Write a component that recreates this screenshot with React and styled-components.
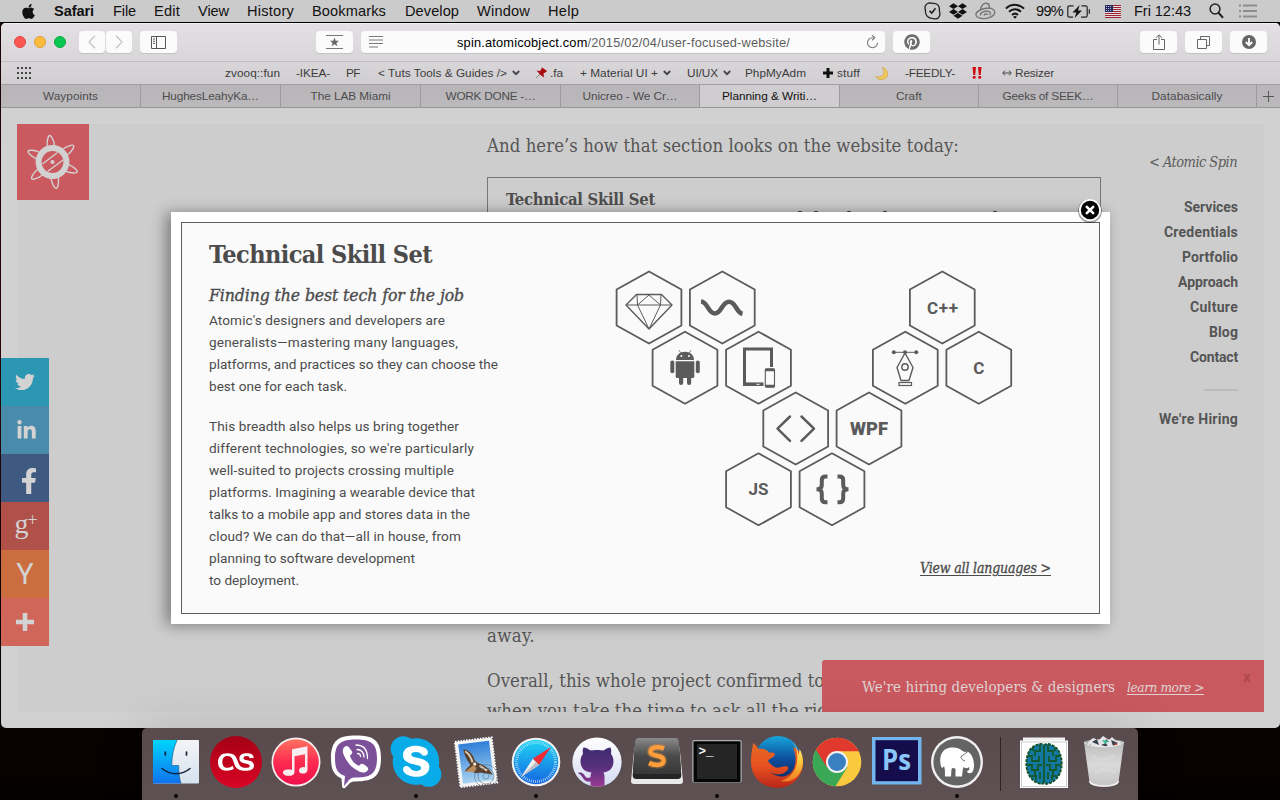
import React, { useLayoutEffect, useRef } from "react";
import styled, { createGlobalStyle, css } from "styled-components";
import {
  FaApple,
  FaDropbox,
  FaFacebookF,
  FaLastfm,
  FaLinkedinIn,
  FaPinterest,
  FaSkype,
  FaTwitter,
} from "react-icons/fa";

const sans = `"Liberation Sans", Arial, sans-serif`;
const serif = `"DejaVu Serif Condensed", "DejaVu Serif", "Liberation Serif", serif`;
const din = `Roboto, "Liberation Sans", sans-serif`;

const GlobalStyle = createGlobalStyle`
  * { box-sizing: border-box; }
  body { margin: 0; background: #060101; overflow: hidden; }
`;

/* Text tracked so that it fills a given measure. */
const FitSpan = styled.span`
  display: inline-block;
  flex: none;
  width: ${(p) => p.$w}px;
  white-space: pre;
  ${(p) =>
    p.$underline &&
    css`
      text-decoration: underline;
      text-underline-offset: 2px;
    `}
`;

function Fit({ w, underline, children }) {
  const ref = useRef(null);
  useLayoutEffect(() => {
    const el = ref.current;
    el.style.letterSpacing = "0px";
    const range = document.createRange();
    range.selectNodeContents(el);
    const natural = range.getBoundingClientRect().width;
    const count = el.textContent.length;
    el.style.letterSpacing = `${(w - natural) / count}px`;
  }, [w, children]);
  return (
    <FitSpan ref={ref} $w={w} $underline={underline}>
      {children}
    </FitSpan>
  );
}

const Desktop = styled.div`
  width: 1280px;
  height: 800px;
  display: flex;
  flex-direction: column;
  overflow: hidden;
  background: linear-gradient(#1a0204 0%, #2a0206 45%, #0a0101 80%, #060101 100%);
  font-family: ${sans};
`;

/* ---------- menu bar ---------- */

const MenuBar = styled.div`
  height: 23px;
  flex: none;
  display: flex;
  justify-content: space-between;
  background: #cbcbcb;
  border-bottom: 1px solid #000;
  font-size: 14.6px;
  line-height: 22px;
  color: #111;
`;
const MenuGroup = styled.div`
  display: flex;
  align-items: center;
  padding-left: ${(p) => p.$left || 0}px;
`;
const MenuItem = styled.div`
  width: ${(p) => p.$w}px;
  font-weight: ${(p) => (p.$bold ? 700 : 400)};
  display: flex;
  align-items: center;
  svg { display: block; }
`;

const menus = [
  ["Safari", 40, 59, true],
  ["File", 23, 41],
  ["Edit", 26, 44],
  ["View", 31, 49],
  ["History", 47, 65],
  ["Bookmarks", 74, 93],
  ["Develop", 54, 72],
  ["Window", 53, 71],
  ["Help", 31, 40],
];

const SkypeStatus = () => (
  <svg width="17" height="18" viewBox="0 0 17 18" fill="none" stroke="#222" strokeWidth="1.3">
    <path d="M4.500 1.200C6 .6 8 1.500 10 1.300C14 1.500 16 5 15.300 9C16.800 12 15.500 16.500 12 16.800C10.500 17 9.500 16.300 8 16.300C3.500 16 1 12.500 1.500 8.500C.3 5.500 1.300 2 4.500 1.200Z" />
    <path d="M5.500 8.800L7.800 11L11.500 6.300" strokeWidth="1.600" />
  </svg>
);
const CloudRing = () => (
  <svg width="21" height="18" viewBox="0 0 21 18" fill="none" stroke="#777" strokeWidth="1.400">
    <path d="M5.500 8C6 3 9 1 11.500 1.300C14 1.600 14.500 4 14.300 6C18 6.500 20.500 9 19.500 11.500C18 15.500 11 17 7 16.500C3 16 .6 14.500 1 12C1.500 9.500 3.500 8.700 5.500 8C7.500 6.500 11 6.500 14.300 6" />
    <path d="M5.500 13.500C5 10.500 9 9 12.500 9.300C15.500 9.600 16.500 11.500 14.500 13" />
    <path d="M9 13.500C9.500 11.800 12.500 11.500 12.800 13" />
  </svg>
);
const WifiGlyph = () => (
  <svg width="20" height="16" viewBox="0 0 20 16" fill="none" stroke="#161616" strokeWidth="2">
    <path d="M.9 5.600C6 .6 14 .6 19.100 5.600" />
    <path d="M4 8.800C7.500 5.500 12.500 5.500 16 8.800" />
    <path d="M7 11.900C8.900 10.300 11.100 10.300 13 11.900" />
    <path d="M10 15.800L8 13.700Q10 12.200 12 13.700Z" fill="#161616" stroke="none" />
  </svg>
);
const Battery = () => (
  <svg width="24" height="13" viewBox="0 0 24 13" fill="none" stroke="#222" strokeWidth="1.200">
    <path d="M6.500 .8H2.500Q.8.8.8 2.500V10.500Q.8 12.200 2.500 12.200H6M14.500 .8H18.500Q20.200.8 20.200 2.500V10.500Q20.200 12.200 18.500 12.200H14" />
    <path d="M22.300 4.300V8.700" />
    <path d="M12.700 0L5.500 7.400H9.300L7.600 13L15 5.400H11Z" fill="#161616" stroke="none" />
  </svg>
);
const Flag = () => (
  <svg width="16" height="13" viewBox="0 0 16 13">
    <rect width="16" height="13" fill="#ddd" />
    {[0, 2, 4, 6, 8, 10, 12].map((y) => (
      <rect key={y} y={y} width="16" height="1" fill="#a32130" />
    ))}
    <rect width="8" height="7" fill="#23285e" />
    {[1, 3, 5].map((y) =>
      [1, 3, 5].map((x) => <rect key={`${x}${y}`} x={x} y={y} width="1" height="1" fill="#b9bcd4" />)
    )}
  </svg>
);
const SearchGlyph = () => (
  <svg width="15" height="16" viewBox="0 0 15 16" fill="none" stroke="#222">
    <circle cx="6" cy="6" r="4.900" strokeWidth="1.500" />
    <path d="M9.500 9.800L14 14.700" strokeWidth="2" />
  </svg>
);
const ListGlyph = () => (
  <svg width="18" height="14" viewBox="0 0 18 14" stroke="#8d8d8d" strokeWidth="2">
    <path d="M0 1.500H2M4 1.500H18M0 7H2M4 7H18M0 12.500H2M4 12.500H18" />
  </svg>
);

/* ---------- browser window ---------- */

const Window = styled.div`
  position: relative;
  margin-left: 1px;
  height: 705px;
  flex: none;
  display: flex;
  flex-direction: column;
  border-radius: 5px;
  overflow: hidden;
  background: #d1d1d1;
`;
const Toolbar = styled.div`
  height: 38px;
  flex: none;
  display: flex;
  align-items: center;
  padding-left: 13px;
  background: linear-gradient(#e2e0e3, #d8d6d9);
  box-shadow: inset 0 1px #f2f1f3;
`;
const Lights = styled.div`
  display: flex;
  gap: 8px;
  margin-right: 13px;
`;
const Light = styled.i`
  width: 12px;
  height: 12px;
  border-radius: 50%;
  background: ${(p) => p.$c};
  border: 1px solid ${(p) => p.$b};
`;
const ToolButton = styled.div`
  width: ${(p) => p.$w || 37}px;
  height: 22px;
  margin-left: ${(p) => p.$ml || 0}px;
  border-radius: 4px;
  background: #fbfbfb;
  box-shadow: 0 1px 0 #c5c3c6;
  display: flex;
  align-items: center;
  justify-content: center;
  svg { display: block; }
`;
const UrlField = styled(ToolButton)`
  justify-content: flex-start;
  padding-left: 8px;
  font-size: 12.800px;
  color: #5e5e5e;
`;
const UrlText = styled.div`
  margin-left: 74px;
  width: 409px;
  line-height: 22px;
  padding-top: 1px;
  b { font-weight: 400; color: #000; }
`;

const Bookmarks = styled.div`
  height: 23px;
  flex: none;
  display: flex;
  align-items: center;
  padding-left: 16px;
  border-top: 1px solid #c0bec1;
  background: linear-gradient(#d8d6d9, #d0ced1);
  font-size: 11.800px;
  color: #3c3c3c;
  line-height: 22px;
`;
const Bookmark = styled.div`
  display: flex;
  align-items: center;
  width: ${(p) => p.$w}px;
  flex: none;
  svg { display: block; margin-right: ${(p) => p.$gap || 0}px; }
`;
const ChevronSvg = styled.svg`
  margin-left: 5px;
`;
const Chevron = () => (
  <ChevronSvg width="8" height="6" viewBox="0 0 8 6" fill="none" stroke="#444" strokeWidth="1.800">
    <path d="M.8 1L4 4.200L7.200 1" />
  </ChevronSvg>
);

const Tabs = styled.div`
  height: 24px;
  flex: none;
  display: grid;
  grid-template-columns: 140px 140px 140px 140px 139px 140px 139px 139px 139px 23px;
  background: linear-gradient(#b7b5b8, #bbb9bc);
  border-top: 1px solid #a19fa2;
  border-bottom: 1px solid #979598;
  font-size: 11.800px;
`;
const Tab = styled.div`
  display: flex;
  align-items: center;
  justify-content: center;
  color: ${(p) => (p.$active ? "#111" : "#4c4c4c")};
  ${(p) => p.$active && css`background: #cfcdd0;`}
  border-right: 1px solid ${(p) => (p.$last ? "transparent" : "#9d9b9e")};
`;
const tabs = [
  ["Waypoints", 55],
  ["HughesLeahyKa…", 97],
  ["The LAB Miami", 80],
  ["WORK DONE -…", 90],
  ["Unicreo - We Cr…", 95],
  ["Planning & Writi…", 95],
  ["Craft", 26],
  ["Geeks of SEEK…", 91],
  ["Databasically", 71],
];

/* ---------- page ---------- */

const Viewport = styled.div`
  position: relative;
  flex: 1;
  padding: 16px 15px 16px 16px;
`;
const Page = styled.div`
  height: 588px;
  width: 1247px;
  display: grid;
  grid-template-columns: 470px 614px 137px;
  background: #cdcdcd;
  overflow: hidden;
`;
const Logo = styled.div`
  width: 72px;
  height: 76px;
  background: #cb5a60;
  svg { display: block; }
`;
const Article = styled.div`
  display: flex;
  flex-direction: column;
  font-family: ${serif};
  font-size: 18.400px;
  line-height: 32px;
  color: #565656;
`;
const Para = styled.p`
  margin: ${(p) => p.$m};
  white-space: nowrap;
`;
const Figure = styled.div`
  height: 434px;
  border: 1px solid #777;
  padding: 12px 18px;
  font-weight: 700;
  font-size: 16.500px;
  line-height: 19px;
  color: #4e4e4e;
`;
const HexTips = styled.svg`
  display: block;
  margin: 1px 0 0 288px;
`;
const Aside = styled.aside`
  display: flex;
  flex-direction: column;
  align-items: flex-end;
  padding-top: 27px;
  font-family: ${din};
  font-size: 14px;
  font-weight: 700;
  line-height: 25px;
  color: #555;
`;
const BackLink = styled.div`
  font-family: ${serif};
  font-style: italic;
  font-weight: 400;
  font-size: 14.500px;
  line-height: 22px;
  margin-bottom: 22px;
  color: #5c5c5c;
  padding-right: 1px;
`;
const Rule = styled.div`
  width: 34px;
  height: 2px;
  margin: 19px 0 16px;
  background: #bbb;
`;
const nav = [
  ["Services", 54],
  ["Credentials", 74],
  ["Portfolio", 56],
  ["Approach", 60],
  ["Culture", 48],
  ["Blog", 29],
  ["Contact", 48],
];

const Social = styled.div`
  position: absolute;
  left: 0;
  top: 250px;
  width: 48px;
  display: flex;
  flex-direction: column;
`;
const SocialLink = styled.div`
  height: 48px;
  background: ${(p) => p.$bg};
  color: #d3d3d3;
  display: flex;
  align-items: center;
  justify-content: center;
  font-family: ${(p) => p.$font || din};
  font-size: ${(p) => p.$size || 28}px;
  font-weight: 400;
  line-height: 40px;
  padding-left: ${(p) => p.$pl || 0}px;
  padding-top: ${(p) => p.$pt || 0}px;
  padding-bottom: ${(p) => p.$pb || 0}px;
  sup { font-size: 18px; line-height: 18px; align-self: flex-start; margin: 9px 0 0 -1px; }
`;

const Hiring = styled.div`
  position: absolute;
  left: 821px;
  top: 552px;
  width: 442px;
  height: 52px;
  border-radius: 3px 0 0 0;
  background: #c9595f;
  display: flex;
  align-items: center;
  padding: 1px 0 0 40px;
  font-family: ${serif};
  font-size: 15px;
  color: #dfd3d3;
`;
const LearnMore = styled.span`
  margin-left: 12px;
  font-size: 13.500px;
  font-style: italic;
`;
const Dismiss = styled.span`
  margin: -20px 0 0 39px;
  font-family: ${din};
  font-size: 15px;
  font-weight: 700;
  color: #ae484d;
`;

/* ---------- lightbox ---------- */

const Lightbox = styled.div`
  position: absolute;
  left: 170px;
  top: 104px;
  width: 939px;
  height: 412px;
  padding: 10px;
  background: #fff;
  box-shadow: -5px 1px 14px rgba(0, 0, 0, 0.4);
`;
const Sheet = styled.div`
  width: 919px;
  height: 392px;
  border: 1px solid #5d5d5d;
  background: #fafafa;
  display: grid;
  grid-template-columns: 418px 1fr;
  padding: 16px 0 0 27px;
`;
const Copy = styled.div`
  font-family: ${din};
  font-size: 13.600px;
  line-height: 21.900px;
  color: #4c4c4c;
`;
const Title = styled.h2`
  margin: 0;
  font: 700 25px/32px ${serif};
  color: #4b4b4b;
`;
const Subtitle = styled.h3`
  margin: 11px 0 2px;
  font: italic 400 17.500px/26px ${serif};
  -webkit-text-stroke: 0.35px #4b4b4b;
  color: #4b4b4b;
`;
const Block = styled.div`
  display: flex;
  flex-direction: column;
  margin-bottom: 18.700px;
`;
const Languages = styled.div`
  display: flex;
  flex-direction: column;
  align-items: flex-start;
  svg { display: block; margin: 21px 0 0 -27px; flex: none; }
`;
const ViewAll = styled.div`
  margin: 18px 0 0 293px;
  font: italic 400 14px/20px ${serif};
  -webkit-text-stroke: 0.3px #4b4b4b;
  color: #4b4b4b;
`;
const Close = styled.div`
  position: absolute;
  right: 7px;
  top: -15px;
  width: 26px;
  height: 26px;
  svg { display: block; }
`;

const para1 = [
  ["Atomic's designers and developers are", 236],
  ["generalists—mastering many languages,", 249],
  ["platforms, and practices so they can choose the", 289],
  ["best one for each task.", 138],
];
const para2 = [
  ["This breadth also helps us bring together", 250],
  ["different technologies, so we're particularly", 265],
  ["well-suited to projects crossing multiple", 245],
  ["platforms. Imagining a wearable device that", 266],
  ["talks to a mobile app and stores data in the", 261],
  ["cloud? We can do that—all in house, from", 252],
  ["planning to software development", 206],
  ["to deployment.", 90],
];

const hexes = [
  [49, 47.5], [122.300, 47.500], [342.300, 47.500],
  [85, 107.700], [158.500, 107.700], [305.300, 107.700], [378.800, 107.700],
  [195.700, 168.500], [269, 168.500],
  [158.500, 229.300], [232, 229.300],
];

const HexCluster = () => (
  <svg width="430" height="280" viewBox="0 0 430 280" fill="none" stroke="#5b5b5b">
    {hexes.map(([x, y]) => (
      <path
        key={`${x}-${y}`}
        strokeWidth="1.800"
        strokeLinejoin="round"
        d={`M${x} ${y - 36}l32.400 18v36l-32.400 18l-32.400 -18v-36z`}
      />
    ))}
    {/* diamond */}
    <path strokeWidth="1.400" strokeLinejoin="round" d="M36.500 34.500H61.500L72 45L49 69L26 45Z" />
    <path strokeWidth="1" d="M26 45H72M37 34.500L37.500 45L49 35L60.500 45L61 34.500M37.500 45L49 69L60.500 45" />
    {/* wave */}
    <path strokeWidth="4.600" d="M101 41.500C108 42 108 53.500 115 53.500C121.500 53.500 122 41.800 129 41.800C136 41.800 136 52.500 142.500 53.800" />
    {/* android */}
    <g fill="#5b5b5b" stroke="none">
      <path d="M76 100C76 95 80 91.800 85 91.800S94 95 94 100Z" />
      <path d="M75.700 101.200H94.300V116.500Q94.300 118 92.800 118H77.200Q75.700 118 75.700 116.500Z" />
      <rect x="70.300" y="100.600" width="4" height="12.600" rx="2" />
      <rect x="95.800" y="100.600" width="4" height="12.600" rx="2" />
      <path d="M79 117H83.200V123Q83.200 125 81.100 125T79 123ZM87 117H91.200V123Q91.200 125 89.100 125T87 123Z" />
      <circle cx="81.300" cy="96" r="1" fill="#fafafa" />
      <circle cx="89" cy="96" r="1" fill="#fafafa" />
    </g>
    <path strokeWidth=".7" d="M79 90L81 93.500M91 90L89 93.500" />
    {/* tablet and phone */}
    <path strokeWidth="3" d="M171.500 107V89H144.500V124.500" />
    <path strokeWidth="3.600" d="M143 124.200H163.500" />
    <path strokeWidth="1" stroke="#fafafa" d="M156.500 124.300H159.500" />
    <rect x="165.300" y="108.800" width="9.200" height="18.300" rx="1.200" strokeWidth="1.100" />
    <path strokeWidth="2.600" d="M165 110H175M165 126H175" />
    {/* brackets */}
    <path strokeWidth="2.500" strokeLinecap="round" strokeLinejoin="round" d="M190 156.500L177.500 168.700L190 180.800M201.500 156.500L214 168.700L201.500 180.800" />
    {/* pen nib */}
    <path strokeWidth="1" d="M294 92.300H316" />
    <g fill="#5b5b5b" stroke="none">
      <circle cx="293.800" cy="92.300" r="2" />
      <circle cx="316.200" cy="92.300" r="2" />
      <circle cx="305" cy="92.300" r="2" />
    </g>
    <path strokeWidth="1.400" strokeLinejoin="round" d="M305 93L297 107.500L301 120.500H309L313 107.500Z" />
    <circle cx="305" cy="107" r="3.200" strokeWidth="1.400" />
    <rect x="299" y="122.500" width="12.500" height="3" strokeWidth="1.200" />
    {/* braces */}
    <path strokeWidth="4" d="M227.500 216.500H225.500Q221.800 216.500 221.800 220V225Q221.800 229.300 216.500 229.300Q221.800 229.300 221.800 233.500V238.500Q221.800 242.300 225.500 242.300H227.500M237.500 216.500H239.500Q243.200 216.500 243.200 220V225Q243.200 229.300 248.500 229.300Q243.200 229.300 243.200 233.500V238.500Q243.200 242.300 239.500 242.300H237.500" />
    <g fill="#5b5b5b" stroke="none" fontFamily="Roboto, sans-serif" fontWeight="700" fontSize="17" textAnchor="middle">
      <text x="342.500" y="53.500" textLength="31">C++</text>
      <text x="378.800" y="113.500">C</text>
      <text x="269" y="174.700" fontSize="18" fontWeight="900" textLength="38" lengthAdjust="spacingAndGlyphs">WPF</text>
      <text x="158.500" y="235.300" textLength="20">JS</text>
    </g>
  </svg>
);

const AtomLogo = () => (
  <svg width="72" height="76" viewBox="0 0 72 76" fill="none" stroke="#d2d2d2">
    <g strokeWidth="1.400">
      {[-6, 52, 112, 172, 231, 294].map((a) => (
        <path key={a} transform={`rotate(${a} 35.500 38)`} d="M31.800 22C32 16 34 11.300 35.500 11.300S39 16 39.200 22" />
      ))}
    </g>
    <circle cx="35.500" cy="38" r="13.900" strokeWidth="6" />
    <path strokeWidth="1.400" d="M25.500 40L40.500 28.500M30.500 47.500L46 36" />
    <circle cx="35.500" cy="38" r="2" fill="#d2d2d2" stroke="none" />
  </svg>
);

/* ---------- dock ---------- */

const Dock = styled.div`
  position: relative;
  align-self: flex-start;
  margin-left: 142px;
  width: 996px;
  height: 72px;
  padding-left: 4px;
  display: flex;
  border-radius: 5px 5px 0 0;
  background: linear-gradient(#594b4d, #5e5153);
  box-shadow: 0 0 50px rgba(0, 0, 0, 0.12);
`;
const DockCell = styled.div`
  width: 60.080px;
  height: 72px;
  flex: none;
  > svg { display: block; width: 60px; height: 72px; }
`;
const DockDivider = styled.div`
  width: 1px;
  height: 54px;
  margin: 9px 13px 0 13px;
  background: #2c2325;
`;

function DockIcon({ running, children }) {
  return (
    <DockCell>
      <svg viewBox="-30 -34 60 72">
        {children}
        {running && <circle cx="0" cy="34" r="2" fill="#060404" />}
      </svg>
    </DockCell>
  );
}

const grad = (id, stops) => (
  <linearGradient id={id} x1="0" y1="0" x2="0" y2="1">
    {stops.map((c, i) => (
      <stop key={i} offset={i / (stops.length - 1)} stopColor={c} />
    ))}
  </linearGradient>
);

const Finder = () => (
  <DockIcon running>
    <defs>{grad("fa", ["#00d4fc", "#0f72ee"])}{grad("fb", ["#f4f4f8", "#d5e2ee"])}</defs>
    <rect x="-23" y="-22" width="46" height="43.500" rx="1" fill="url(#fb)" />
    <path d="M-23 -22H1.200C-2.500 -14 -4 -6 -4.300 3.500H2.800C2.500 10 3.500 16 5 21.500H-23Z" fill="url(#fa)" />
    <path d="M1.200 -22C-2.500 -14 -4 -6 -4.300 3.500H2.800C2.500 10 3.500 16 5 21.500" fill="none" stroke="#1d3d63" strokeWidth=".5" />
    <path d="M-10.700 -10V-7M10.500 -10V-7" stroke="#12233c" strokeWidth="1.700" strokeLinecap="round" />
    <path d="M-14 6.500C-6 13.500 6 13.500 14 6.500" fill="none" stroke="#12233c" strokeWidth="1.500" strokeLinecap="round" />
  </DockIcon>
);
const LastFm = () => (
  <DockIcon>
    <defs>{grad("lf", ["#a60016", "#d80524"])}</defs>
    <circle r="26" fill="url(#lf)" />
    <g transform="scale(1 .88)">
      <FaLastfm x="-18" y="-18" size={36} color="#fff" />
    </g>
  </DockIcon>
);
const Itunes = () => (
  <DockIcon>
    <defs>{grad("it", ["#ff7261", "#fc2b50", "#f0104c"])}</defs>
    <circle r="24.500" fill="#f5eeee" />
    <circle r="22.800" fill="url(#it)" />
    <path d="M-4.500 -12.500L11 -15.500V8C11 13 2.500 13 2.500 9C2.500 5.500 7 5 8.500 5.500V-7.500L-2 -5.500V10.500C-2 15.500 -13.500 15 -13.500 11C-13.500 7.500 -9 7.500 -4.500 8Z" fill="#f6eef0" transform="translate(0.5 -.3)" />
  </DockIcon>
);
const Viber = () => (
  <DockIcon>
    <path d="M0 -26.500C17 -26.500 25 -22 25 -4C25 15 17 19 0 19.500C-4 19.500 -5 20 -7 22L-11 26Q-14 27 -14 23L-14.500 16.500C-22 13 -25 8 -25 -4C-25 -22 -17 -26.500 0 -26.500Z" fill="#fff" />
    <path d="M0 -22.500C14.500 -22.500 21 -19 21 -4C21 12 14.500 15.500 0 15.500C-5 15.500 -7 17.500 -8.500 20L-12 24L-11 14C-19 11.500 -21 6 -21 -4C-21 -19 -14.500 -22.500 0 -22.500Z" fill="#7d519a" />
    <path d="M-11 -15.500C-8 -17.500 -6.500 -14 -4 -10.500C-3 -8.500 -5 -7.500 -6 -6.500C-5 -2 -1 2.500 3 3.800C4.500 2 6 1 8 2.500C11 4.500 14 6.500 11 9C8 12 4.500 10.500 -1 7C-7 3.500 -11 -3.500 -13 -9C-13.500 -12 -13 -14 -11 -15.500Z" fill="#fff" />
    <path d="M0 -17C7.500 -17 11.500 -12.500 11.500 -3.500M1 -12.500C5.500 -12.500 8 -9 8 -5M1.500 -8.500C3.500 -8.500 4.500 -7 4.500 -5.500" fill="none" stroke="#fff" strokeWidth="1.300" strokeLinecap="round" />
  </DockIcon>
);
const Skype = () => (
  <DockIcon running>
    <circle r="18" fill="#fff" />
    <FaSkype x="-29" y="-29.500" size={58} color="#0aabe9" />
  </DockIcon>
);
const Mail = () => (
  <DockIcon>
    <defs>{grad("ml", ["#2f7fd8", "#a9d3f0"])}</defs>
    <g transform="rotate(-7)">
      <rect x="-18.500" y="-22.500" width="37" height="45.500" fill="#f3f3f3" stroke="#fff" strokeWidth="2" strokeDasharray="1.600 1.200" />
      <rect x="-15.500" y="-19.500" width="31" height="39.500" fill="url(#ml)" />
      <path d="M-11 -14C-7 -14 -2 -9 -1 -2C0 0 2 1 3 2C8 4 13 9 15 15C10 12 5 12 1 11C-2 12 -4 10 -5 8L-12 8C-11 5 -7 4 -6 2C-8 -2 -11 -8 -11 -14Z" fill="#5a402c" />
      <path d="M-9.500 -12C-6 -9 -4 -5 -3.500 0M3 4L10 10" stroke="#d9c9b4" strokeWidth="2" fill="none" />
      <path d="M-12 8L-3 3L0 6L-3 10Z" fill="#b98d5c" />
      <circle cx="-1.500" cy="2" r="1.600" fill="#efe9df" />
    </g>
    <g fill="none" stroke="#4b5866" strokeOpacity=".5" strokeWidth=".9">
      <circle cx="10" cy="14" r="11.500" /><circle cx="10" cy="14" r="8" /><circle cx="10" cy="14" r="3" />
    </g>
  </DockIcon>
);
const Safari = () => (
  <DockIcon running>
    <defs>{grad("sf", ["#1fd5f5", "#1665e0"])}</defs>
    <circle r="24.300" fill="#f2f2f2" />
    <circle r="22.300" fill="url(#sf)" />
    <circle r="19.500" fill="none" stroke="#bfe6fb" strokeWidth="3" strokeDasharray=".7 1.345" />
    <path d="M15 -15L-3.200 -3.200L3 3Z" fill="#f02b33" />
    <path d="M-15 15L-3.200 -3.200L3 3Z" fill="#eeeef0" />
    <path d="M-15 15L3 3L0 0Z" fill="#bcbcc2" />
  </DockIcon>
);
const GitHub = () => (
  <DockIcon>
    <defs>
      {grad("gw", ["#ffffff", "#d5dcf2"])}
      {grad("gh", ["#3f2c70", "#57307c", "#9a3a94"])}
    </defs>
    <circle r="24.600" fill="url(#gw)" />
    <path d="M-13.500 -14.500C-11 -14.500 -8.500 -13 -6.500 -11.500C-3 -12.300 3 -12.300 6.500 -11.500C8.500 -13 11 -14.500 13.500 -14.500C14.500 -12 14.300 -9.500 14 -8C16.500 -5 17 -1 16 3C14.500 8 10.500 10 6.500 10.500C7.300 12 7.500 13.500 7.500 15V23.500C3 25 -2 25 -6.500 23.500V19.500C-13 20.500 -13.500 16 -15.500 14C-16.500 12.500 -18 12 -19 11C-15.500 9.500 -13 12 -12 14C-11 16 -9 16 -6.500 15.500C-6.500 13.500 -6.500 12 -5.500 10.500C-10.500 10 -14.500 8 -16 3C-17 -1 -16.500 -5 -14 -8C-14.500 -10 -14.500 -12.500 -13.500 -14.500Z" fill="url(#gh)" />
  </DockIcon>
);
const Sublime = () => (
  <DockIcon>
    <defs>{grad("sb", ["#8a8a8a", "#4a4a4a", "#383838"])}</defs>
    <path d="M-22.500 -15L-26 19Q-26 22 -23 22H23Q26 22 26 19L22.500 -15Z" fill="#e9e9e9" />
    <path d="M-19 -24H19Q21.500 -24 21.800 -21L24.300 13Q24.300 17 21 17H-21Q-24.300 17 -24.300 13L-21.800 -21Q-21.500 -24 -19 -24Z" fill="#252525" />
    <path d="M-19 -24H19Q21.500 -24 21.800 -21L24 9Q24 12 21.500 12H-21.500Q-24 12 -24 9L-21.800 -21Q-21.500 -24 -19 -24Z" fill="url(#sb)" />
    <path d="M7 -13.500C1 -16 -6.500 -15 -6.500 -10C-6.500 -5 6.500 -8 6.500 -1.500C6.500 4 -2 4 -8 1" fill="none" stroke="#ff9d2e" strokeOpacity=".3" strokeWidth="7" />
    <path d="M7 -13.500C1 -16 -6.500 -15 -6.500 -10C-6.500 -5 6.500 -8 6.500 -1.500C6.500 4 -2 4 -8 1" fill="none" stroke="#ff9d3a" strokeWidth="4.300" />
  </DockIcon>
);
const Terminal = () => (
  <DockIcon running>
    <rect x="-24.700" y="-22" width="49.400" height="42.700" rx="2" fill="#a9b3b5" />
    <rect x="-23.500" y="-20.800" width="47" height="41" rx="1" fill="#060606" />
    <rect x="-20" y="-18" width="40" height="35" fill="#252525" />
    <text x="-18.500" y="-7.500" fontFamily="Liberation Mono, monospace" fontWeight="700" fontSize="12.500" fill="#f3f3f3">&gt;_</text>
  </DockIcon>
);
const Firefox = () => (
  <DockIcon>
    <defs>
      {grad("fx", ["#18a5dc", "#0d4e9c", "#0b245c"])}
      {grad("fy", ["#e66a25", "#e8521f", "#b9261a"])}
      {grad("fz", ["#fff3a0", "#ffc93a", "#ef7a20"])}
    </defs>
    <circle cx="1" cy="-3" r="23" fill="url(#fx)" />
    <path d="M-24 -19C-22 -18 -20 -15 -18.500 -13C-14 -14 -9 -12 -8 -9.500C-4 -10 -1 -9 -2.500 -6.500C-4 -4 -8 -3.500 -9 -1C-5 4 -2 7 4 5C9 3.500 12 4 11 7C8 13 -1 14 -7 10C1 17 13 16 17 6C20 -2 18 -10 16 -15C23 -12 25 -7 26 0C26 15 15 26 0 26S-26 15 -26 0C-26 -8 -24.500 -13 -24 -19Z" fill="url(#fy)" />
    <path d="M14 -21C20 -16 21 -9 20 0C19 9 13 16 4 19C16 22 26 12 26 0C26 -6 24 -11 22.500 -13C22.500 -10 22 -8 21.500 -7C20.500 -14 18 -18 14 -21Z" fill="url(#fz)" />
  </DockIcon>
);
const Chrome = () => (
  <DockIcon>
    <circle r="24.300" fill="#fbc93d" />
    <path d="M0 0L-21 -12.200A24.300 24.300 0 0 0 -1.500 24.250L10.500 5Z" fill="#3aa757" />
    <path d="M-21 -12.200A24.300 24.300 0 0 1 21.800 -10.700H0L-10 5.500Z" fill="#e2392f" />
    <circle r="11" fill="#f2f2f2" />
    <circle r="9" fill="#3a7fc0" />
  </DockIcon>
);
const Photoshop = () => (
  <DockIcon>
    <rect x="-25" y="-25" width="49.500" height="47.500" fill="#72b5ee" />
    <rect x="-21.500" y="-21.800" width="42.500" height="41" fill="#150c4c" />
    <text x="-15" y="8" fontFamily="Open Sans, sans-serif" fontWeight="700" fontSize="28" textLength="29" lengthAdjust="spacingAndGlyphs" fill="#8bc6fb">Ps</text>
  </DockIcon>
);
const Mamp = () => (
  <DockIcon running>
    <circle r="26" fill="#f0f0f0" />
    <circle r="23.600" fill="#646464" />
    <path d="M-12 14.500C-12 9 -12 7 -13 4C-14.500 7 -16 6 -16.500 2C-18 -7 -14 -14 -6 -14.500C-1 -15 2 -14 5 -11.500C8 -9 9 -11 12 -9.500C17 -6 18 4 16 9C14.500 12 10.500 12 10 9C12 9 13 7 12 5C10 7 8 6 6.500 5C5.500 8 5.500 11 5 14.500H-1.500V7Q-4 5 -5.500 7L-6 14.500Z" fill="#fff" />
    <path d="M4 -5.500L11 -10.500M4 -5.500C4 -3 5 -2 8 -1" fill="none" stroke="#646464" strokeWidth=".9" />
  </DockIcon>
);
const Brain = () => (
  <DockIcon>
    <rect x="-21" y="-24.500" width="42" height="4" fill="#efefef" />
    <rect x="-24" y="-21.500" width="48" height="47.500" fill="#fff" />
    <rect x="-22.500" y="-20" width="45" height="44.500" fill="none" stroke="#cfcfcf" />
    <path d="M0 -17C5 -20 14 -15 16 -8C19 0 18 11 12 17C8 21 2 23 0 21C-2 23 -8 21 -12 17C-18 11 -19 0 -16 -8C-14 -15 -5 -20 0 -17Z" fill="#1478a4" stroke="#12532a" strokeWidth="2" strokeDasharray="3 1" />
    <path d="M0 -17V21M-4 -17V-11H-9V-6M-16 -6H-12V-1H-5V-6M-17 3H-12V8H-6V3H-2M-13 14H-8V18M-4 10V17M-9 8V13M4 -17V-11H9V-6M16 -6H12V-1H5V-6M17 3H12V8H6V3H2M13 14H8V18M4 10V17M9 8V13M-11 -14V-11M11 -14V-11" fill="none" stroke="#12592d" strokeWidth="1.800" />
  </DockIcon>
);
const Trash = () => (
  <DockIcon>
    <defs>{grad("tr", ["#bdbdbd", "#d9d9d9", "#c4c4c4"])}</defs>
    <path d="M-20 -20C-14 -24 14 -24 20 -20L16 -13H-15Z" fill="#a9a9ab" />
    <path d="M-16 -20L-11 -24L-5 -22L-1 -26L5 -22L8 -25L12 -21L17 -21L16 -15H-15Z" fill="#e4e4e6" />
    <path d="M-12 -20L-7 -23L-5 -17ZM7 -22L14 -19L9 -16ZM-3 -17L2 -19L4 -15ZM-14 -18L-11 -15L-15 -15ZM2 -23L5 -20L1 -20Z" fill="#3a3f4c" />
    <path d="M-2 -22L5 -21L1 -18Z" fill="#3dbf9c" />
    <path d="M11 -19L14 -17L10 -16Z" fill="#c2482c" />
    <path d="M-20 -20C-14 -13.500 14 -13.500 20 -20L14.500 20C13 26.500 -13 26.500 -14.500 20Z" fill="url(#tr)" />
    <path d="M-20 -20C-14 -13.500 14 -13.500 20 -20" fill="none" stroke="#ececec" strokeWidth="1" />
    <path d="M-12 -6C-6 -2 4 -1 10 -7M-9 12C-4 7 4 6 11 11" stroke="#dedede" strokeWidth="3" strokeOpacity=".45" fill="none" />
    <path d="M-14.500 19C-13 25.500 13 25.500 14.500 19" fill="none" stroke="#f0f0f0" strokeWidth="1.500" />
  </DockIcon>
);

/* ---------- app ---------- */

export default function App() {
  return (
    <Desktop>
      <GlobalStyle />
      <MenuBar>
        <MenuGroup $left={20}>
          <MenuItem $w={34}><FaApple size={17} /></MenuItem>
          {menus.map(([label, w, cell, bold]) => (
            <MenuItem key={label} $w={cell} $bold={bold}><Fit w={w}>{label}</Fit></MenuItem>
          ))}
        </MenuGroup>
        <MenuGroup>
          <MenuItem $w={25}><SkypeStatus /></MenuItem>
          <MenuItem $w={26}><FaDropbox size={18} /></MenuItem>
          <MenuItem $w={30}><CloudRing /></MenuItem>
          <MenuItem $w={31}><WifiGlyph /></MenuItem>
          <MenuItem $w={31}><Fit w={27}>99%</Fit></MenuItem>
          <MenuItem $w={38}><Battery /></MenuItem>
          <MenuItem $w={29}><Flag /></MenuItem>
          <MenuItem $w={75}><Fit w={57}>Fri 12:43</Fit></MenuItem>
          <MenuItem $w={30}><SearchGlyph /></MenuItem>
          <MenuItem $w={41}><ListGlyph /></MenuItem>
        </MenuGroup>
      </MenuBar>

      <Window>
        <Toolbar>
          <Lights>
            <Light $c="#fc5753" $b="#df4744" />
            <Light $c="#fdbc40" $b="#de9f34" />
            <Light $c="#0ac753" $b="#0aa942" />
          </Lights>
          <ToolButton $w={26}>
            <svg width="8" height="14" viewBox="0 0 8 14" fill="none" stroke="#c4c4c4" strokeWidth="1.300"><path d="M7 .8L1 7L7 13.200" /></svg>
          </ToolButton>
          <ToolButton $w={26} $ml={1}>
            <svg width="8" height="14" viewBox="0 0 8 14" fill="none" stroke="#c4c4c4" strokeWidth="1.300"><path d="M1 .8L7 7L1 13.200" /></svg>
          </ToolButton>
          <ToolButton $ml={8}>
            <svg width="15" height="13" viewBox="0 0 15 13" fill="none" stroke="#555" strokeWidth="1"><path d="M.5.500H14.500V12.500H.5ZM5.500.500V12.500M2 3H4M2 5.200H4M2 7.400H4" /></svg>
          </ToolButton>
          <ToolButton $ml={139}>
            <svg width="17" height="14" viewBox="0 0 17 14">
              <path d="M0 .5H17M0 13.500H17" stroke="#777" />
              <path d="M8.500 2.500L9.700 5.800H13L10.400 7.900L11.400 11.300L8.500 9.300L5.600 11.300L6.600 7.900L4 5.800H7.300Z" fill="#666" />
            </svg>
          </ToolButton>
          <UrlField $w={524} $ml={8}>
            <svg width="14" height="12" viewBox="0 0 14 12" stroke="#777"><path d="M0 .5H14M0 4H14M0 7.500H14M0 11H9" /></svg>
            <UrlText>
              <Fit w={333}><b>spin.atomicobject.com</b>/2015/02/04/user-focused-website/</Fit>
            </UrlText>
            <svg width="13" height="14" viewBox="0 0 13 14" fill="none" stroke="#777" strokeWidth="1.100">
              <path d="M7.500 2.700H6.500A5 5 0 1 0 11.500 7.700" />
              <path d="M6 0L8.800 2.700L6 5.400" />
            </svg>
          </UrlField>
          <ToolButton $ml={8}><FaPinterest size={16} color="#6e6e6e" /></ToolButton>
          <ToolButton $ml={210}>
            <svg width="12" height="16" viewBox="0 0 12 16" fill="none" stroke="#666"><path d="M4 5.500H.500V15.500H11.500V5.500H8M6 10.500V1M3 3.800L6 .8L9 3.800" /></svg>
          </ToolButton>
          <ToolButton $ml={8}>
            <svg width="13" height="13" viewBox="0 0 13 13" fill="none" stroke="#666"><path d="M.5 3.500H9.500V12.500H.5ZM3.500 3V.5H12.500V9.500H10" /></svg>
          </ToolButton>
          <ToolButton $ml={8}>
            <svg width="14" height="14" viewBox="0 0 14 14"><circle cx="7" cy="7" r="7" fill="#666" /><path d="M7 3V10M3.800 7L7 10.300L10.200 7" fill="none" stroke="#fff" strokeWidth="1.800" /></svg>
          </ToolButton>
        </Toolbar>

        <Bookmarks>
          <Bookmark $w={208}>
            <svg width="15" height="12" viewBox="0 0 15 12" fill="#444">
              {[0, 4, 8, 12].map((x) => [0, 5, 10].map((y) => <rect key={`${x}-${y}`} x={x} y={y} width="2" height="2" />))}
            </svg>
          </Bookmark>
          <Bookmark $w={71}><Fit w={55}>zvooq::fun</Fit></Bookmark>
          <Bookmark $w={50}><Fit w={34}>-IKEA-</Fit></Bookmark>
          <Bookmark $w={32}><Fit w={14}>PF</Fit></Bookmark>
          <Bookmark $w={157}><Fit w={129}>{"< Tuts Tools & Guides />"}</Fit><Chevron /></Bookmark>
          <Bookmark $w={45} $gap={3}>
            <svg width="12" height="12" viewBox="0 0 12 12">
              <path d="M1 11L5 7" stroke="#888" strokeWidth="1" />
              <path d="M1.500 3.500L5 4L7 1L6.500 0L12 4L11 5L8.500 6.500L9 10.500L5.500 8Z" fill="#a80e10" />
            </svg>
            <Fit w={13}>.fa</Fit>
          </Bookmark>
          <Bookmark $w={107}><Fit w={78}>+ Material UI +</Fit><Chevron /></Bookmark>
          <Bookmark $w={58}><Fit w={31}>UI/UX</Fit><Chevron /></Bookmark>
          <Bookmark $w={78}><Fit w={61}>PhpMyAdm</Fit></Bookmark>
          <Bookmark $w={52} $gap={4}>
            <svg width="10" height="10" viewBox="0 0 10 10"><path d="M5 0V10M0 5H10" stroke="#111" strokeWidth="3" /></svg>
            <Fit w={23}>stuff</Fit>
          </Bookmark>
          <Bookmark $w={30}>
            <svg width="13" height="13" viewBox="0 0 13 13"><path d="M7 .3C14 2 14.500 10 9 12.300C5.500 13.500 2 12 .6 9.300C3.500 10.500 6.500 10 8 7.500C9.300 5 8.800 2.500 7 .3Z" fill="#efc75e" stroke="#c9963a" strokeWidth=".5" /></svg>
          </Bookmark>
          <Bookmark $w={67}><Fit w={50}>-FEEDLY-</Fit></Bookmark>
          <Bookmark $w={30}>
            <svg width="10" height="12" viewBox="0 0 10 12" fill="#d00910"><path d="M.5 0H4L3.200 8H1.300ZM6 0H9.500L8.700 8H6.800Z" /><circle cx="2.200" cy="10.300" r="1.500" /><circle cx="7.700" cy="10.300" r="1.500" /></svg>
          </Bookmark>
          <Bookmark $w={60} $gap={3}>
            <svg width="10" height="6" viewBox="0 0 10 6" fill="none" stroke="#444"><path d="M1 3H9M3 .5L.7 3L3 5.500M7 .5L9.300 3L7 5.500" /></svg>
            <Fit w={39}>Resizer</Fit>
          </Bookmark>
        </Bookmarks>

        <Tabs>
          {tabs.map(([label, w], i) => (
            <Tab key={label} $active={i === 5}><Fit w={w}>{label}</Fit></Tab>
          ))}
          <Tab $last>
            <svg width="11" height="11" viewBox="0 0 11 11" stroke="#555"><path d="M5.500 0V11M0 5.500H11" /></svg>
          </Tab>
        </Tabs>

        <Viewport>
          <Page>
            <Logo><AtomLogo /></Logo>
            <Article>
              <Para $m="6px 0 15px"><Fit w={472}>And here’s how that section looks on the website today:</Fit></Para>
              <Figure>
                <Fit w={149}>Technical Skill Set</Fit>
                <HexTips width="210" height="3" viewBox="0 0 210 3" fill="#444">
                  {[6, 22, 55, 91, 201].map((x) => <circle key={x} cx={x} cy="3.200" r="2.500" />)}
                </HexTips>
              </Figure>
              <Para $m="9px 0 13px"><Fit w={48}>away.</Fit></Para>
              <Para $m="0"><Fit w={337}>Overall, this whole project confirmed to</Fit></Para>
              <Para $m="-2px 0 0"><Fit w={341}>when you take the time to ask all the rig</Fit></Para>
            </Article>
            <Aside>
              <BackLink><Fit w={88}>&lt; Atomic Spin</Fit></BackLink>
              {nav.map(([label, w]) => <Fit key={label} w={w}>{label}</Fit>)}
              <Rule />
              <Fit w={79}>We're Hiring</Fit>
            </Aside>
          </Page>

          <Social>
            <SocialLink $bg="#2c97b2"><FaTwitter size={20} /></SocialLink>
            <SocialLink $bg="#4a8aaa" $pl={2}><FaLinkedinIn size={21} /></SocialLink>
            <SocialLink $bg="#3f5a80" $pl={8} $pt={6}><FaFacebookF size={26} /></SocialLink>
            <SocialLink $bg="#b05149" $font={`"Liberation Serif", serif`} $size={28} $pb={5} $pl={2}>g<sup>+</sup></SocialLink>
            <SocialLink $bg="#cc6d3f" $size={29}>Y</SocialLink>
            <SocialLink $bg="#d06659">
              <svg width="18" height="18" viewBox="0 0 18 18" stroke="#d3d3d3" strokeWidth="4.500"><path d="M9 0V18M0 9H18" /></svg>
            </SocialLink>
          </Social>

          <Hiring>
            <Fit w={253}>We're hiring developers &amp; designers</Fit>
            <LearnMore><Fit w={77} underline>learn more &gt;</Fit></LearnMore>
            <Dismiss>x</Dismiss>
          </Hiring>

          <Lightbox>
            <Sheet>
              <Copy>
                <Title><Fit w={223}>Technical Skill Set</Fit></Title>
                <Subtitle><Fit w={255}>Finding the best tech for the job</Fit></Subtitle>
                <Block>{para1.map(([t, w]) => <Fit key={t} w={w}>{t}</Fit>)}</Block>
                <Block>{para2.map(([t, w]) => <Fit key={t} w={w}>{t}</Fit>)}</Block>
              </Copy>
              <Languages>
                <HexCluster />
                <ViewAll><Fit w={131} underline>View all languages &gt;</Fit></ViewAll>
              </Languages>
            </Sheet>
            <Close>
              <svg width="26" height="26" viewBox="0 0 26 26">
                <circle cx="13" cy="14" r="12" fill="#000" fillOpacity=".35" />
                <circle cx="13" cy="13" r="11" fill="#fff" />
                <circle cx="13" cy="13" r="9.200" fill="#050505" />
                <path d="M9.800 9.800L16.200 16.200M16.200 9.800L9.800 16.200" stroke="#fff" strokeWidth="2.600" strokeLinecap="round" />
              </svg>
            </Close>
          </Lightbox>
        </Viewport>
      </Window>

      <Dock>
        <Finder />
        <LastFm />
        <Itunes />
        <Viber />
        <Skype />
        <Mail />
        <Safari />
        <GitHub />
        <Sublime />
        <Terminal />
        <Firefox />
        <Chrome />
        <Photoshop />
        <Mamp />
        <DockDivider />
        <Brain />
        <Trash />
      </Dock>
    </Desktop>
  );
}
